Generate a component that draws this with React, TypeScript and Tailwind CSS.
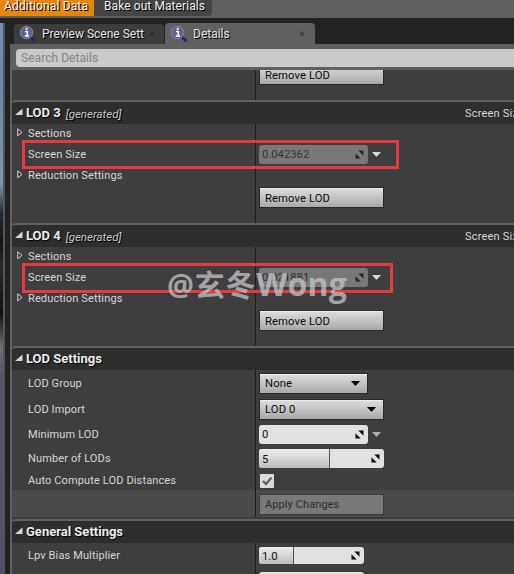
import type { ReactNode } from "react";

function Magnifier() {
  return (
    <svg width="18" height="18" viewBox="0 0 18 18" className="shrink-0">
      <path d="M10.5 11 L15.5 15.5" stroke="#25286a" strokeWidth="3" strokeLinecap="round" />
      <circle cx="7.5" cy="7.5" r="6.2" fill="#5c6488" stroke="#8288a8" strokeWidth="1" />
      <path d="M6 6.5 H8.3 V10.5 M5.8 11 H10" stroke="#fff" strokeWidth="1.6" fill="none" />
      <circle cx="7.7" cy="3.8" r="1.1" fill="#fff" />
    </svg>
  );
}

function Close({ color }: { color: string }) {
  return (
    <svg width="6" height="6" viewBox="0 0 6 6" className="shrink-0">
      <path d="M1 1 L5 5 M5 1 L1 5" stroke={color} strokeWidth="1.3" />
    </svg>
  );
}

function Spin({ color = "#0a0a0a" }: { color?: string }) {
  return (
    <svg width="9" height="9" viewBox="0 0 9 9" className="shrink-0">
      <path d="M3.3 0.5 H8.5 V5.7 Z M0.5 3.3 V8.5 H5.7 Z" fill={color} />
    </svg>
  );
}

function Down({ color, className = "" }: { color: string; className?: string }) {
  return (
    <svg width="9" height="5" viewBox="0 0 9 5" className={"shrink-0 " + className}>
      <path d="M0 0 H9 L5 4.6 H4 Z" fill={color} />
    </svg>
  );
}

function Row({ label, arrow, h, bg = "", children }: { label?: string; arrow?: boolean; h: string; bg?: string; children?: ReactNode }) {
  return (
    <div className={"flex shrink-0 " + h + " " + bg}>
      <div className="flex w-[244px] shrink-0 items-center border-r border-[#1c1c1c] pl-[5px]">
        <div className="w-[11px] shrink-0">
          {arrow && (
            <svg width="6" height="9" viewBox="0 0 6 9" className="-mt-0.5">
              <path d="M0.7 0.8 V7.8 L4.7 4.7 V3.9 Z" fill="none" stroke="#d0d0d0" strokeWidth="1" />
            </svg>
          )}
        </div>
        <span className="pt-px tracking-[0.13px]">{label}</span>
      </div>
      <div className="flex items-center pl-[3px]">{children}</div>
    </div>
  );
}

function Header({ title, generated }: { title: string; generated?: boolean }) {
  return (
    <div className="flex h-6 shrink-0 items-center rounded-tl border-t-2 border-[#606060] bg-[#2e2e2e] pl-[3px]">
      <svg width="8" height="8" viewBox="0 0 8 8" className="-mt-0.5 shrink-0">
        <path d="M7.5 0.5 V7 H0 Z" fill="#d4d4d4" />
      </svg>
      <span className="ml-[3px] text-[13px] font-bold text-[#ececec] [text-shadow:1px_1px_1px_#000]">{title}</span>
      {generated && (
        <>
          <span className="ml-[5px] pt-px text-[11.5px] italic text-[#c8c8c8] [text-shadow:1px_1px_0_#000]">[generated]</span>
          <span className="ml-auto w-[49px] shrink-0 overflow-hidden whitespace-nowrap pt-px tracking-[0.2px]">Screen Size:</span>
        </>
      )}
    </div>
  );
}

function Button({ children, w = "w-[123px]", arrow }: { children: string; w?: string; arrow?: boolean }) {
  return (
    <div className={"ml-px flex h-[19px] shrink-0 items-center bg-linear-to-b from-[#dedede] to-[#a9a9a9] pl-[5px] pr-[7px] text-[11.25px] text-[#0c0c0c] shadow-[0_0_0_1px_#292929,inset_0_1px_0_#eee] " + w}>
      <span className="flex-1 pt-[2px] tracking-[0.1px]">{children}</span>
      {arrow && <Down color="#000" />}
    </div>
  );
}

function Field({ value, w = "w-[109px]", h = "h-[19px]", fill, disabled }: { value: string; w?: string; h?: string; fill?: string; disabled?: boolean }) {
  return (
    <div className={"flex shrink-0 items-center overflow-hidden rounded-[3px] text-[11.25px] " + w + " " + h + (disabled ? " bg-[#787878] text-[#333]" : " bg-[#e1e1e1] text-[#111]")}>
      <div className={"flex h-full items-center pl-[3px] pt-[2px] " + (fill ? fill + " border-r border-[#555] bg-linear-to-b from-[#ededed] to-[#bdbdbd]" : "")}>{value}</div>
      <div className="ml-auto mr-1 flex">
        <Spin color={disabled ? "#242424" : "#0a0a0a"} />
      </div>
    </div>
  );
}

function Lod({ n, value }: { n: number; value: string }) {
  return (
    <>
      <Header title={"LOD " + n} generated />
      <Row h="h-[18px]" label="Sections" arrow />
      <Row h="h-6" label="Screen Size">
        <Field value={value} disabled />
        <Down color="#d8d8d8" className="ml-1" />
      </Row>
      <Row h="h-[18px]" label="Reduction Settings" arrow />
      <Row h="h-[27px]">
        <Button>Remove LOD</Button>
      </Row>
      <Row h="h-3" />
    </>
  );
}

export default function App() {
  return (
    <div className="relative flex h-[574px] w-[514px] flex-col overflow-hidden bg-[#222] font-[Roboto,sans-serif] text-[11px] leading-[14px] text-[#d6d6d6]">
      <div className="flex h-[18px] shrink-0 items-start bg-[#606060] text-[12px] text-[#f0f0f0] [text-shadow:1px_1px_0_#000]">
        <div className="flex h-4 w-[94px] items-end bg-[#e38710] pl-1">
          <span className="mb-[3px] whitespace-nowrap tracking-[0.15px]">Additional Data</span>
        </div>
        <div className="flex h-4 w-[118px] items-end rounded-br-sm bg-[#454545] pl-[10px]">
          <span className="mb-[3px] whitespace-nowrap tracking-[0.08px]">Bake out Materials</span>
        </div>
      </div>
      <div className="flex min-h-0 flex-1">
        <div className="mt-[5px] w-[5px] shrink-0 border-r-2 border-[#555] bg-[linear-gradient(#7290b8_0px,#6c87ae_70px,#8295ae_160px,#242a32_190px,#15171a_220px,#2c2c24_245px,#111_290px,#70706c_325px,#55556f_350px,#50506e_550px)]" />
        <div className="ml-[5px] flex min-w-0 flex-1 flex-col">
          <div className="flex h-[26px] shrink-0 items-end pl-1 text-[12px] text-[#e4e4e4] [text-shadow:1px_1px_0_#000]">
            <div className="mr-px flex h-5 w-[150px] items-center rounded-t-sm bg-[#3c3c3c] pl-[5px] pr-[9px]">
              <Magnifier />
              <span className="ml-[5px] flex-1 whitespace-nowrap">Preview Scene Sett</span>
              <Close color="#2c2c2c" />
            </div>
            <div className="flex h-[21px] w-[150px] items-center rounded-t-sm bg-[#606060] pl-[5px] pr-[10px]">
              <Magnifier />
              <span className="ml-[5px] flex-1">Details</span>
              <Close color="#3f3f3f" />
            </div>
          </div>
          <div className="flex h-[26px] shrink-0 bg-[#606060] pb-[3px] pl-[6px] pt-[5px]">
            <div className="flex flex-1 items-center rounded-l-sm bg-[#cacaca] pl-[5px] text-[12px] text-[#858585]">
              <span className="tracking-[0.05px]">Search Details</span>
            </div>
          </div>
          <div className="flex min-h-0 flex-1 flex-col border-l-2 border-[#606060] bg-[#3e3e3e]">
            <div className="flex h-[30px] shrink-0 flex-col justify-end overflow-hidden">
              <Row h="h-[19px]">
                <Button>Remove LOD</Button>
              </Row>
              <Row h="h-4" />
            </div>
            <Lod n={3} value="0.042362" />
            <Lod n={4} value="0.021881" />
            <Header title="LOD Settings" />
            <Row h="h-[26px]" label="LOD Group">
              <Button w="w-[107px]" arrow>None</Button>
            </Row>
            <Row h="h-[26px]" label="LOD Import">
              <Button arrow>LOD 0</Button>
            </Row>
            <Row h="h-6" label="Minimum LOD">
              <Field value="0" />
              <Down color="#b0b0b0" className="ml-1" />
            </Row>
            <Row h="h-[25px]" label="Number of LODs">
              <Field value="5" w="w-[125px]" fill="w-[71px]" />
            </Row>
            <Row h="h-[19px]" label="Auto Compute LOD Distances">
              <div className="ml-px flex size-[14px] items-center justify-center rounded-[1px] bg-[#dcdcdc]">
                <svg width="12" height="12" viewBox="0 0 12 12">
                  <path d="M2 6 L5 9 L10.5 2.5" fill="none" stroke="#666" strokeWidth="2.4" />
                </svg>
              </div>
            </Row>
            <Row h="h-[29px]" bg="border-b-2 border-[#3c3c3c] bg-[#494949]">
              <div className="ml-px mt-px flex h-[19px] w-[123px] items-center bg-[#797979] pl-[5px] pt-px text-[11px] tracking-[0.1px] text-[#2c2c2c] shadow-[0_0_0_1px_#3a3a3a]">Apply Changes</div>
            </Row>
            <Header title="General Settings" />
            <Row h="h-[25px]" label="Lpv Bias Multiplier">
              <Field value="1.0" w="w-[105px]" h="h-[17px]" fill="w-[35px]" />
            </Row>
            <Row h="h-[25px]">
              <Field value="" w="w-[105px]" h="h-[17px]" />
            </Row>
          </div>
        </div>
      </div>
      <div className="absolute left-[22px] top-[140px] h-[29px] w-[377px] border-3 border-[#e53b40]" />
      <div className="absolute left-[22px] top-[263px] h-[30px] w-[371px] border-3 border-[#e53b40]" />
      <div className="absolute left-[167px] top-[264px] whitespace-nowrap font-['Open_Sans','Noto_Sans_CJK_SC',sans-serif] text-[30px] font-bold leading-[40px] tracking-[0.8px] text-[#c4c4c4]/75">
        @玄冬<span className="text-[32px] tracking-[0.2px]">Wong</span>
      </div>
    </div>
  );
}
